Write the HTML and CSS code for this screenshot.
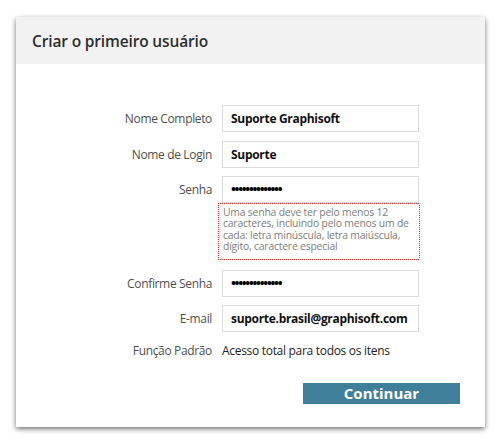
FILE: index.html
```html
<!DOCTYPE html>
<html lang="pt">
<head>
<meta charset="utf-8">
<title>Criar o primeiro usuário</title>
<link rel="stylesheet" href="styles.css">
</head>
<body>
<div class="panel">
  <div class="header">Criar o primeiro usuário</div>
  <div class="form">
    <div class="row">
      <div class="label">Nome Completo</div>
      <div class="field">Suporte Graphisoft</div>
    </div>
    <div class="row">
      <div class="label">Nome de Login</div>
      <div class="field">Suporte</div>
    </div>
    <div class="row">
      <div class="label">Senha</div>
      <div class="field-group">
        <div class="field dots">••••••••••••••</div>
        <div class="hint">Uma senha deve ter pelo menos 12 caracteres, incluindo pelo menos um de cada: letra minúscula, letra maiúscula, dígito, caractere especial</div>
      </div>
    </div>
    <div class="row">
      <div class="label">Confirme Senha</div>
      <div class="field dots">••••••••••••••</div>
    </div>
    <div class="row">
      <div class="label">E-mail</div>
      <div class="field">suporte.brasil@graphisoft.com</div>
    </div>
    <div class="row plain">
      <div class="label">Função Padrão</div>
      <div class="value">Acesso total para todos os itens</div>
    </div>
  </div>
  <div class="actions">
    <button class="btn">Continuar</button>
  </div>
</div>
</body>
</html>
```
FILE: styles.css
```css
html, body {
  margin: 0;
  padding: 0;
  background: #ffffff;
}
body {
  font-family: "Open Sans", "Liberation Sans", sans-serif;
  padding: 17px 16px 16px 16px;
}
.panel {
  width: 469px;
  height: 410px;
  background: #ffffff;
  box-shadow: 0 2px 5px rgba(0, 0, 0, 0.55);
  display: flex;
  flex-direction: column;
}
.header {
  height: 47px;
  background: #f2f2f2;
  box-sizing: border-box;
  padding-left: 16px;
  display: flex;
  align-items: center;
  font-size: 15.5px;
  letter-spacing: -0.15px;
  font-weight: 600;
  color: #2e2e2e;
}
.form {
  padding-top: 41px;
  display: flex;
  flex-direction: column;
  gap: 8.5px;
}
.row {
  display: grid;
  grid-template-columns: 196px 197px;
  column-gap: 10px;
  align-items: start;
}
.label {
  text-align: right;
  font-size: 12px;
  letter-spacing: -0.35px;
  color: #505050;
  height: 27px;
  line-height: 27px;
}
.field {
  height: 27px;
  box-sizing: border-box;
  border: 1px solid #dcdcdc;
  padding-left: 8px;
  font-size: 12px;
  letter-spacing: -0.3px;
  font-weight: 700;
  color: #111111;
  line-height: 25px;
  white-space: nowrap;
}
.dots {
  font-size: 13px;
  letter-spacing: -1.3px;
  color: #000000;
}
.field-group {
  display: flex;
  flex-direction: column;
}
.hint {
  margin-left: -4px;
  margin-right: -1px;
  height: 57px;
  box-sizing: border-box;
  padding: 3px 4px 0 4px;
  border: 1px solid transparent;
  background-color: #ffffff;
  background-image:
    linear-gradient(90deg, #ff1a1a 50%, #ffffff 50%),
    linear-gradient(90deg, #ff1a1a 50%, #ffffff 50%),
    linear-gradient(180deg, #ff1a1a 50%, #ffffff 50%),
    linear-gradient(180deg, #ff1a1a 50%, #ffffff 50%);
  background-size: 2px 1px, 2px 1px, 1px 2px, 1px 2px;
  background-position: left top, left bottom, left top, right top;
  background-repeat: repeat-x, repeat-x, repeat-y, repeat-y;
  background-origin: border-box;
  background-clip: border-box;
  font-size: 10.4px;
  letter-spacing: -0.2px;
  line-height: 11.4px;
  color: #808080;
  margin-bottom: 1px;
}
.plain .label,
.plain .value {
  height: 18px;
  line-height: 18px;
  margin-top: 1px;
}
.value {
  font-size: 12px;
  letter-spacing: -0.3px;
  color: #1e1e1e;
}
.actions {
  display: flex;
  justify-content: flex-end;
  padding: 23px 25px 0 0;
}
.btn {
  width: 157px;
  height: 21px;
  border: none;
  padding: 0;
  background: #3f7f99;
  color: #ffffff;
  font-family: "Open Sans", "Liberation Sans", sans-serif;
  font-size: 15px;
  font-weight: 700;
  line-height: 21px;
}
```
